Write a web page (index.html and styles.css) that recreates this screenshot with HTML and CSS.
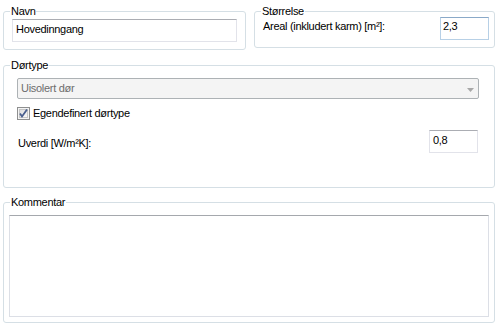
FILE: index.html
```html
<!DOCTYPE html>
<html lang="no">
<head>
<meta charset="utf-8">
<title>Dør</title>
<link rel="stylesheet" href="styles.css">
</head>
<body>
<div class="form">
  <div class="top">
    <fieldset class="grp navn">
      <legend>Navn</legend>
      <div class="body navn-body">
        <div class="tb name-tb">Hovedinngang</div>
      </div>
    </fieldset>
    <fieldset class="grp size">
      <legend>Størrelse</legend>
      <div class="body size-body">
        <span class="lbl area-lbl">Areal (inkludert karm) [m²]:</span>
        <div class="tb num focus area-tb">2,3</div>
      </div>
    </fieldset>
  </div>

  <fieldset class="grp type">
    <legend>Dørtype</legend>
    <div class="body type-body">
      <div class="combo">
        <span class="combo-text">Uisolert dør</span>
        <svg class="combo-arrow" width="7" height="4" viewBox="0 0 7 4"><path d="M0 0h7L3.5 4z" fill="#a8a8a8"/></svg>
      </div>
      <div class="check-row">
        <svg class="check" width="13" height="13" viewBox="0 0 13 13">
          <defs>
            <linearGradient id="cg" x1="0" y1="0" x2="1" y2="1">
              <stop offset="0" stop-color="#dcdcdc"/>
              <stop offset="1" stop-color="#fbfbfb"/>
            </linearGradient>
          </defs>
          <rect x="0.5" y="0.5" width="12" height="12" fill="#f4f4f4" stroke="#8e8f8f"/>
          <rect x="2.5" y="2.5" width="8" height="8" fill="url(#cg)" stroke="#c6c6c6"/>
          <path d="M3 6.5 L5 9.5 L10 2.5" fill="none" stroke="#4a5f8e" stroke-width="1.8"/>
        </svg>
        <span class="lbl">Egendefinert dørtype</span>
      </div>
      <div class="u-row">
        <span class="lbl u-lbl">Uverdi [W/m²K]:</span>
        <div class="tb num u-tb">0,8</div>
      </div>
    </div>
  </fieldset>

  <fieldset class="grp comment">
    <legend>Kommentar</legend>
    <div class="body comment-body">
      <div class="textarea"></div>
    </div>
  </fieldset>
</div>
</body>
</html>
```

FILE: styles.css
```css
html, body {
  margin: 0;
  padding: 0;
  background: #ffffff;
}

body {
  font-family: "Liberation Sans", Arial, sans-serif;
  font-size: 11px;
  line-height: 13px;
  letter-spacing: -0.3px;
  color: #000000;
}

.form {
  width: 500px;
  height: 330px;
  box-sizing: border-box;
  padding: 5px 5px 0 3px;
  display: flex;
  flex-direction: column;
}

.top {
  display: grid;
  grid-template-columns: 243px 241px;
  column-gap: 8px;
  align-items: start;
}

.grp {
  margin: 0;
  padding: 0;
  border: 1px solid #d5dfe5;
  border-radius: 3px;
  min-inline-size: 0;
}

.grp legend {
  margin-left: 6px;
  padding: 0 1px;
  font-size: 11px;
  line-height: 13px;
}

.lbl {
  white-space: nowrap;
}

/* text boxes */
.tb {
  box-sizing: border-box;
  height: 23px;
  border: 1px solid #e2e3ea;
  border-top-color: #abadb3;
  background: #ffffff;
  white-space: nowrap;
}

.navn-body {
  padding: 1px 8px 7px 8px;
}

.name-tb {
  padding: 3px 3px 0 3px;
}

.size-body {
  display: flex;
  align-items: flex-start;
  justify-content: space-between;
  padding: 0 5px 7px 8px;
  margin-top: -1px;
}

.area-lbl {
  margin-top: 3px;
}

.area-tb {
  width: 49px;
  padding: 2px 2px 0 2px;
}

.focus {
  border-color: #b7d0e6;
  border-top-color: #8aa9c8;
}

/* Dørtype */
.type {
  margin-top: 9px;
}

.type-body {
  padding: 6px 15px 34px 13px;
}

.combo {
  box-sizing: border-box;
  height: 21px;
  border: 1px solid #adb2b5;
  border-radius: 2px;
  background: #f4f4f4;
  display: flex;
  align-items: flex-start;
  justify-content: space-between;
  padding: 3px 4px 0 3px;
  color: #6d6d6d;
}

.combo-arrow {
  margin-top: 6px;
}

.check-row {
  display: flex;
  align-items: flex-start;
  gap: 3px;
  margin-top: 8px;
}

.check {
  display: block;
  flex: none;
}

.u-row {
  display: flex;
  align-items: flex-start;
  justify-content: space-between;
  margin-top: 10px;
  padding-left: 1px;
}

.u-lbl {
  margin-top: 7px;
}

.u-tb {
  width: 49px;
  margin-right: 1px;
  padding: 3px 2px 0 3px;
}

/* Kommentar */
.comment {
  margin-top: 8px;
}

.comment-body {
  padding: 6px 5px 5px 5px;
}

.textarea {
  box-sizing: border-box;
  height: 102px;
  border: 1px solid #dcdfe6;
  border-top-color: #a5a8ad;
  background: #ffffff;
}
```
